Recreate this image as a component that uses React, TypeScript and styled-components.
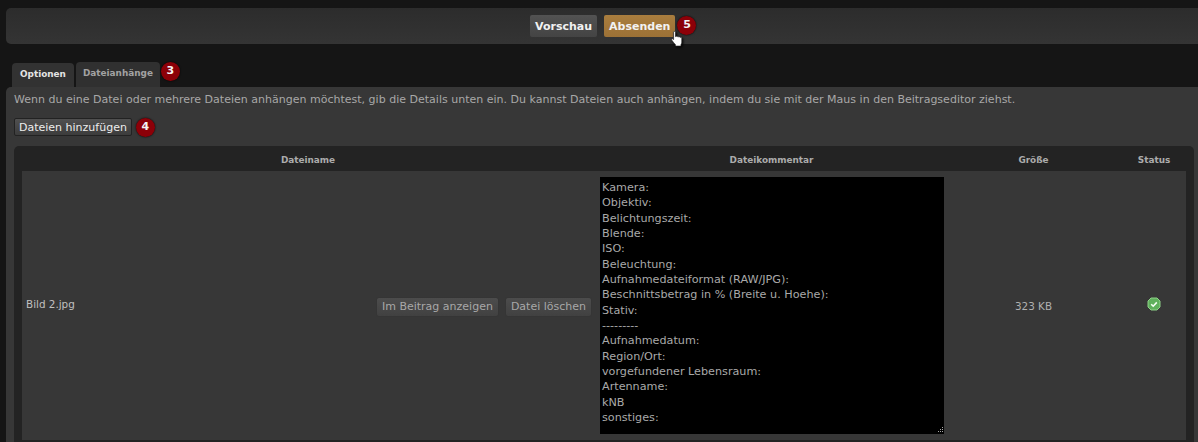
import React from "react";
import styled, { createGlobalStyle } from "styled-components";

const GlobalStyle = createGlobalStyle`
  html, body {
    margin: 0;
    padding: 0;
    background: #151515;
    overflow: hidden;
  }
  body {
    font-family: "DejaVu Sans", Verdana, sans-serif;
    font-size: 11px;
    color: #b4b4b4;
  }
`;

const Page = styled.div`
  width: 1202px;
  height: 442px;
  padding: 8px 0 0 6px;
  box-sizing: border-box;
  position: relative;
  overflow: hidden;
`;

const ActionBar = styled.div`
  height: 36px;
  box-sizing: border-box;
  padding-top: 7px;
  padding-left: 524px;
  display: flex;
  align-items: flex-start;
  gap: 7px;
  border-radius: 5px;
  background: linear-gradient(#2c2c2c, #343434);
`;

const ActionButton = styled.div<{ $primary?: boolean }>`
  height: 22px;
  line-height: 23px;
  padding: 0 5px;
  border-radius: 2px;
  font-weight: bold;
  font-size: 11px;
  color: #f2f2f2;
  background: ${(p) =>
    p.$primary ? "linear-gradient(#a97d3e, #9c7136)" : "linear-gradient(#525252, #444)"};
`;

const Badge = styled.span`
  width: 19px;
  height: 19px;
  border-radius: 50%;
  background: #8c0008;
  box-shadow: 0 0 2px #000;
  color: #f4f4f4;
  font-weight: bold;
  font-size: 11px;
  line-height: 18px;
  text-align: center;
  flex: none;
`;

const SubmitBadge = styled(Badge)`
  margin: 1px 0 0 -5px;
`;

const Cursor = styled.svg`
  position: absolute;
  left: 671px;
  top: 31px;
  filter: drop-shadow(1px 1px 1px #000);
`;

const TabRow = styled.div`
  margin-top: 17px;
  padding-left: 6px;
  height: 26px;
  display: flex;
  align-items: flex-start;
`;

const Tab = styled.div<{ $active?: boolean }>`
  margin-top: ${(p) => (p.$active ? "2px" : "1px")};
  height: ${(p) => (p.$active ? "24px" : "25px")};
  line-height: 23px;
  padding: 0 ${(p) => (p.$active ? "8px" : "7px")};
  margin-right: ${(p) => (p.$active ? "2px" : "1px")};
  border-radius: 4px 4px 0 0;
  font-size: 8.9px;
  font-weight: bold;
  color: ${(p) => (p.$active ? "#e4e4e4" : "#a2a2a2")};
  background: ${(p) => (p.$active ? "#323232" : "#303030")};
`;

const TabBadge = styled(Badge)`
  margin-top: 1px;
`;

const Content = styled.div`
  height: 360px;
  padding: 5px 8px 0;
  border-radius: 5px 5px 0 0;
  background: #373737;
`;

const Intro = styled.div`
  font-size: 11.02px;
  line-height: 16px;
  color: #a8a8a8;
  white-space: nowrap;
`;

const UploadRow = styled.div`
  margin-top: 10px;
  height: 18px;
  display: flex;
  align-items: center;
  gap: 4px;
`;

const UploadButton = styled.div`
  height: 18px;
  line-height: 17px;
  padding: 0 4px;
  box-sizing: border-box;
  border: 1px solid #222;
  border-radius: 2px;
  font-size: 11px;
  color: #ededed;
  background: linear-gradient(#505050, #3c3c3c);
`;

const Table = styled.div`
  margin-top: 10px;
  padding: 0 8px 2px;
  width: 1164px;
  border-radius: 5px 5px 0 0;
  background: #232323;
`;

const Columns = styled.div`
  display: grid;
  grid-template-columns: 572px 355px 169px 68px;
`;

const HeadCell = styled.div`
  height: 25px;
  line-height: 28px;
  text-align: center;
  font-size: 8.9px;
  font-weight: bold;
  color: #acacac;

  &:last-child {
    padding-left: 4px;
  }
`;

const Row = styled(Columns)`
  height: 269px;
  background: #373737;
`;

const NameCell = styled.div`
  display: flex;
  align-items: center;
  justify-content: space-between;
  padding: 0 3px 4px 4px;
`;

const FileName = styled.span`
  font-size: 10.4px;
  color: #c0c0c0;
`;

const FileActions = styled.div`
  display: flex;
  gap: 8px;
  margin-top: 6px;
`;

const RowButton = styled.div`
  height: 18px;
  line-height: 18px;
  padding: 0 5px;
  border-radius: 2px;
  font-size: 11px;
  color: #a8a8a8;
  background: linear-gradient(#4c4c4c, #414141);
  box-shadow: 0 0 1px #2a2a2a;
`;

const CommentCell = styled.div`
  padding: 6px 0 0 6px;
`;

const CommentBox = styled.div`
  position: relative;
  width: 344px;
  height: 257px;
  box-sizing: border-box;
  padding: 3px 2px;
  background: #000;
  color: #a9a9a9;
  font-size: 11.2px;
  line-height: 15.33px;
  white-space: pre;
`;

const ResizeGrip = styled.svg`
  position: absolute;
  right: 1px;
  bottom: 1px;
`;

const SizeCell = styled.div`
  display: flex;
  align-items: center;
  justify-content: center;
  padding-top: 1px;
  font-size: 10.4px;
  color: #b0b0b0;
`;

const StatusCell = styled.div`
  display: flex;
  align-items: center;
  justify-content: center;
  padding: 0 0 3px 4px;
`;

const comment = `Kamera:
Objektiv:
Belichtungszeit:
Blende:
ISO:
Beleuchtung:
Aufnahmedateiformat (RAW/JPG):
Beschnittsbetrag in % (Breite u. Hoehe):
Stativ:
---------
Aufnahmedatum:
Region/Ort:
vorgefundener Lebensraum:
Artenname:
kNB
sonstiges:`;

const App: React.FC = () => {
  return (
    <Page>
      <GlobalStyle />
      <ActionBar>
        <ActionButton>Vorschau</ActionButton>
        <ActionButton $primary>Absenden</ActionButton>
        <SubmitBadge>5</SubmitBadge>
      </ActionBar>
      <Cursor width="12" height="16" viewBox="0 0 12 16">
        <path
          d="M2.6 1.2c0-1.2 1.9-1.2 1.9 0v4.4l.5-.2c.5-.3 1.1-.1 1.3.2.5-.3 1.2-.1 1.4.3.6-.3 1.3 0 1.5.5.9-.2 1.6.3 1.6 1.2v3.6c0 1-.4 1.6-.8 2.3v1.6H4.4v-1.5C3.2 12.4 1.8 10.6.8 9.2.2 8.4 1.2 7.3 2 8l.6.6z"
          fill="#fff"
          stroke="#222"
          strokeWidth="0.7"
        />
      </Cursor>
      <TabRow>
        <Tab $active>Optionen</Tab>
        <Tab>Dateianhänge</Tab>
        <TabBadge>3</TabBadge>
      </TabRow>
      <Content>
        <Intro>
          Wenn du eine Datei oder mehrere Dateien anhängen möchtest, gib die Details unten ein. Du kannst Dateien auch anhängen, indem du sie mit der Maus in den Beitragseditor ziehst.
        </Intro>
        <UploadRow>
          <UploadButton>Dateien hinzufügen</UploadButton>
          <Badge>4</Badge>
        </UploadRow>
        <Table>
          <Columns>
            <HeadCell>Dateiname</HeadCell>
            <HeadCell>Dateikommentar</HeadCell>
            <HeadCell>Größe</HeadCell>
            <HeadCell>Status</HeadCell>
          </Columns>
          <Row>
            <NameCell>
              <FileName>Bild 2.jpg</FileName>
              <FileActions>
                <RowButton>Im Beitrag anzeigen</RowButton>
                <RowButton>Datei löschen</RowButton>
              </FileActions>
            </NameCell>
            <CommentCell>
              <CommentBox>
                {comment}
                <ResizeGrip width="6" height="6" viewBox="0 0 6 6">
                  <path d="M5 0h1v1H5zM3 2h1v1H3zM5 2h1v1H5zM1 4h1v1H1zM3 4h1v1H3zM5 4h1v1H5z" fill="#aaa" />
                </ResizeGrip>
              </CommentBox>
            </CommentCell>
            <SizeCell>323 KB</SizeCell>
            <StatusCell>
              <svg width="14" height="14" viewBox="0 0 14 14">
                <path
                  d="M4 1h6l3 3v6l-3 3H4l-3-3V4z"
                  fill="#5fb05c"
                  stroke="#8ed087"
                  strokeWidth="1"
                  strokeLinejoin="round"
                />
                <path d="M4.2 7.2l2 2L9.8 5.4" fill="none" stroke="#f4fff2" strokeWidth="1.6" />
              </svg>
            </StatusCell>
          </Row>
        </Table>
      </Content>
    </Page>
  );
};

export default App;
